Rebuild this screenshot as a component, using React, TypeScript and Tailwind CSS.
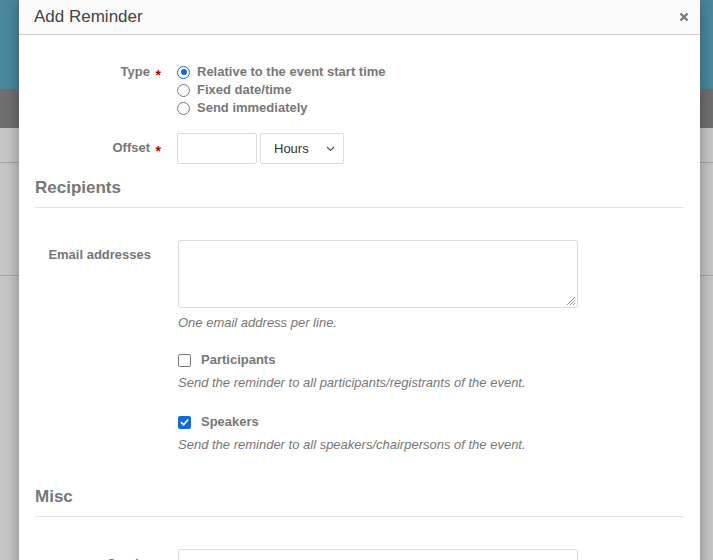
import React from "react";

function Star() {
  return <span className="absolute right-[16px] top-[3px] text-[14px] text-[#b30000]">*</span>;
}

function Radio({ checked, label }: { checked?: boolean; label: string }) {
  return (
    <label className="flex items-center h-[18px]">
      {checked ? (
        <span className="w-[13px] h-[13px] rounded-full border-[1.5px] border-[#0b6cdc] flex items-center justify-center">
          <span className="w-[6px] h-[6px] rounded-full bg-[#0b6cdc]" />
        </span>
      ) : (
        <span className="w-[13px] h-[13px] rounded-full border-[1.5px] border-[#7a7a86]" />
      )}
      <span className="ml-[7px] font-bold text-[13px] text-[#777]">{label}</span>
    </label>
  );
}

function Checkbox({ checked, label }: { checked?: boolean; label: string }) {
  return (
    <label className="flex items-center h-[18px]">
      {checked ? (
        <span className="w-[13px] h-[13px] rounded-[2px] bg-[#0b6cdc] flex items-center justify-center">
          <svg width="9" height="9" viewBox="0 0 10 10" fill="none">
            <path d="M1.5 5.2 L4 7.6 L8.6 2.2" stroke="white" strokeWidth="1.8" strokeLinecap="round" strokeLinejoin="round" />
          </svg>
        </span>
      ) : (
        <span className="w-[13px] h-[13px] rounded-[2px] border-[1.5px] border-[#7a7a86]" />
      )}
      <span className="ml-[10px] font-bold text-[13px] text-[#777]">{label}</span>
    </label>
  );
}

function SectionTitle({ children }: { children: React.ReactNode }) {
  return (
    <div>
      <h3 className="text-[17px] leading-[20px] font-bold text-[#777]">{children}</h3>
      <div className="mt-[9px] border-t border-[#e5e5e5]" />
    </div>
  );
}

export default function App() {
  return (
    <div className="relative w-[713px] h-[560px] overflow-hidden bg-[#c6c6c6] font-['Liberation_Sans',Arial,sans-serif]">
      {/* page behind the overlay */}
      <div className="h-[89px] bg-[#4a889e]" />
      <div className="h-[39px] bg-[#6f6f6f]" />
      <div className="h-[35px] border-b border-[#a3a3a3]" />
      <div className="h-[113px] border-b border-[#a8a8a8]" />

      {/* dialog */}
      <div className="absolute left-[19px] top-0 w-[681px] h-[600px] bg-white shadow-[0_0_14px_rgba(0,0,0,0.35)]">
        <div className="h-[35px] bg-[#fafafa] border-b border-[#cfcfcf] flex items-center justify-between pl-[15px] pr-[11px]">
          <span className="text-[17px] text-[#444]">Add Reminder</span>
          <svg width="10" height="10" viewBox="0 0 10 10">
            <path d="M1.5 1.5 L8.5 8.5 M8.5 1.5 L1.5 8.5" stroke="#777" strokeWidth="2.4" />
          </svg>
        </div>

        <div className="px-[16px] pt-[28px]">
          {/* Type */}
          <div className="flex">
            <div className="relative w-[142px] pr-[27px] text-right font-bold text-[13px] leading-[18px] text-[#777]">
              Type
              <Star />
            </div>
            <div className="flex flex-col">
              <Radio checked label="Relative to the event start time" />
              <Radio label="Fixed date/time" />
              <Radio label="Send immediately" />
            </div>
          </div>

          {/* Offset */}
          <div className="flex mt-[16px]">
            <div className="relative w-[142px] pr-[27px] pt-[6px] text-right font-bold text-[13px] leading-[18px] text-[#777]">
              Offset
              <span className="absolute right-[16px] top-[9px] text-[14px] text-[#b30000]">*</span>
            </div>
            <div className="flex gap-[3px]">
              <div className="w-[80px] h-[31px] border border-[#dcdcdc] rounded-[2px]" />
              <div className="w-[84px] h-[31px] border border-[#dcdcdc] rounded-[2px] flex items-center justify-between pl-[13px] pr-[8px] text-[13px] text-[#333]">
                <span>Hours</span>
                <svg width="9" height="6" viewBox="0 0 9 6" fill="none">
                  <path d="M1 1 L4.5 4.5 L8 1" stroke="#555" strokeWidth="1.2" />
                </svg>
              </div>
            </div>
          </div>

          <div className="mt-[14px]">
            <SectionTitle>Recipients</SectionTitle>
          </div>

          {/* Email addresses */}
          <div className="flex mt-[32px]">
            <div className="w-[143px] pr-[27px] pt-[6px] text-right font-bold text-[13px] leading-[18px] text-[#777]">
              Email addresses
            </div>
            <div className="flex flex-col">
              <div className="relative w-[400px] h-[68px] border border-[#dcdcdc] rounded-[2px]">
                <svg className="absolute right-[1px] bottom-[1px]" width="11" height="11" viewBox="0 0 11 11">
                  <path d="M10 2 L2 10 M10 5 L5 10 M10 8 L8 10" stroke="#888" strokeWidth="0.9" />
                </svg>
              </div>
              <div className="mt-[6px] text-[13px] leading-[18px] italic text-[#777]">One email address per line.</div>

              <div className="mt-[19px]">
                <Checkbox label="Participants" />
              </div>
              <div className="mt-[5px] text-[13px] leading-[18px] italic text-[#777]">
                Send the reminder to all participants/registrants of the event.
              </div>

              <div className="mt-[21px]">
                <Checkbox checked label="Speakers" />
              </div>
              <div className="mt-[5px] text-[13px] leading-[18px] italic text-[#777]">
                Send the reminder to all speakers/chairpersons of the event.
              </div>
            </div>
          </div>

          <div className="mt-[33px]">
            <SectionTitle>Misc</SectionTitle>
          </div>

          {/* Sender */}
          <div className="flex mt-[32px]">
            <div className="w-[143px] pr-[27px] pt-[6px] text-right font-bold text-[13px] leading-[18px] text-[#777]">
              Sender
            </div>
            <div className="w-[400px] h-[31px] border border-[#dcdcdc] rounded-[2px] px-[12px] flex items-center text-[13px] text-[#aaa]">
              Send reminder emails from this address
            </div>
          </div>
        </div>
      </div>
    </div>
  );
}
